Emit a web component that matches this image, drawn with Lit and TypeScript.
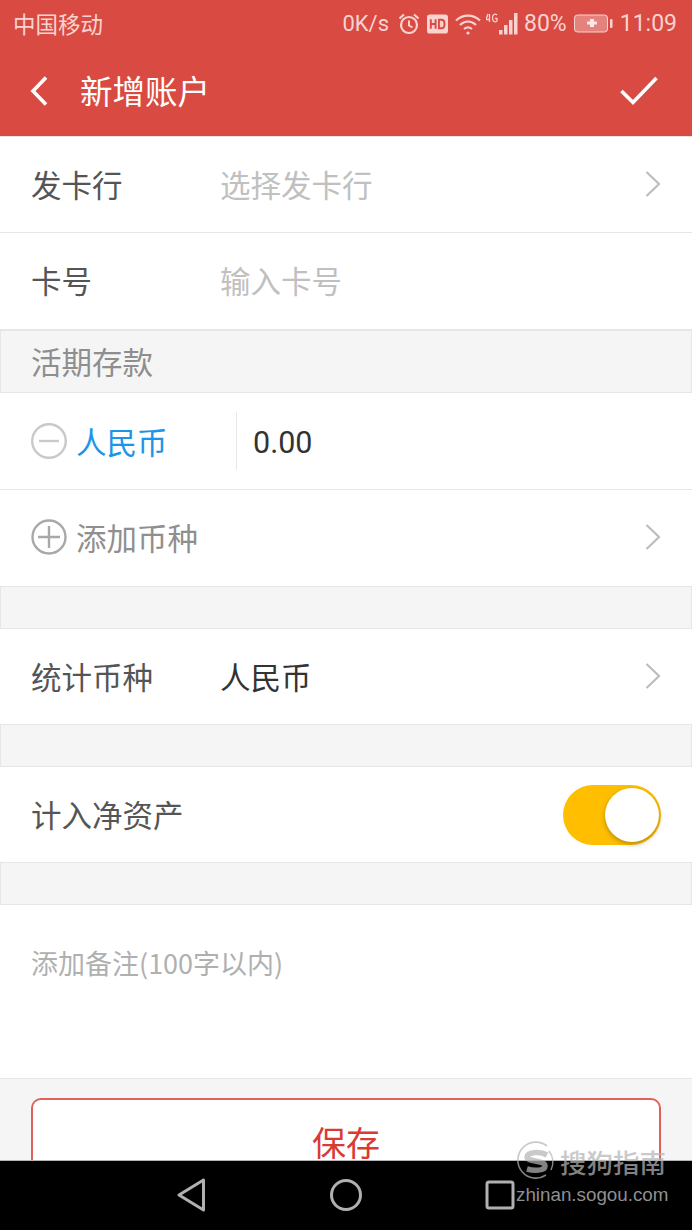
import { LitElement, html, css } from "lit";
import { customElement } from "lit/decorators.js";

const chevron = html`<svg class="chev" width="18" height="28" viewBox="0 0 18 28"><path d="M2.5 2 L15 14 L2.5 26" fill="none" stroke="#bdbdbd" stroke-width="2.2"/></svg>`;

@customElement("app-root")
export class AppRoot extends LitElement {
  static styles = css`
    :host { display: block; width: 692px; height: 1230px; overflow: hidden; position: relative; background: #f5f5f5;
      font-family: "Noto Sans CJK SC", "Roboto", sans-serif; }
    .page { display: flex; flex-direction: column; height: 1230px; }
    .header { background: #d94a42; height: 136px; flex: none; color: #fff; border-bottom: 1px solid #e9e3e2; }
    .status { height: 47px; display: flex; align-items: center; padding: 0 15px 0 13px; color: #f8d3d0; font-size: 22px; font-family: Roboto, "Noto Sans CJK SC", sans-serif; }
    .carrier { font-family: "Noto Sans CJK SC", sans-serif; font-size: 22.5px; flex: 1; line-height: 47px; }
    .status svg { flex: none; display: block; }
    .m9 { margin-left: 9px; }
    .m7 { margin-left: 7px; }
    .m5 { margin-left: 5px; }
    .pct { margin-left: 4px; font-size: 23px; }
    .time { margin-left: 6px; font-size: 23px; }
    .bar { height: 85px; display: flex; align-items: center; padding: 0 34px 0 29px; }
    .bar svg { margin-top: 2px; }
    .title { font-size: 32.5px; margin-left: 31px; flex: 1; color: #fff; line-height: 44px; }
    .content { flex: 1; min-height: 0; overflow: hidden; display: flex; flex-direction: column; }
    .row { height: 97px; box-sizing: border-box; flex: none; background: #fff; border-bottom: 1px solid #e6e6e6; display: flex; align-items: center; padding: 0 30px 2px 31px; font-size: 30.5px; color: #555; line-height: 44px; }
    .short { height: 96px; }
    .row .label { width: 189px; flex: none; }
    .row .value { flex: 1; }
    .ph { color: #c0c0c0; }
    .dark { color: #333; }
    .gap { height: 42px; box-sizing: border-box; flex: none; background: #f5f5f5; border: 1px solid #e6e6e6; border-top: none; }
    .section { height: 63px; flex: none; background: #f5f5f5; border: 1px solid #e6e6e6; box-sizing: border-box; display: flex; align-items: center; padding: 0 0 2px 30px; color: #8e8e8e; font-size: 30.5px; }
    .cur { width: 205px; flex: none; display: flex; align-items: center; height: 58px; border-right: 1px solid #e8e8e8; margin-top: 2px; }
    .cur svg, .add svg { margin-right: 9px; flex: none; }
    .blue { color: #1c95e8; font-size: 30.5px; }
    .amount { font-family: Roboto, sans-serif; font-size: 30.5px; color: #333; margin-left: 16px; padding-top: 6px; }
    .add { flex: 1; display: flex; align-items: center; color: #8f8f8f; font-size: 30.5px; }
    .switch { width: 98px; height: 60px; margin: 2px 1px 0 auto; background: #ffbf00; border-radius: 30px; position: relative; }
    .knob { position: absolute; right: 2px; top: 3px; width: 54px; height: 54px; border-radius: 50%; background: #fff; box-shadow: 0 2px 5px rgba(90,70,0,.45); }
    .notes { height: 174px; flex: none; background: #fff; border-bottom: 1px solid #e6e6e6; padding: 36px 31px 0; box-sizing: border-box; color: #b0b0b0; font-size: 27px; line-height: 44px; }
    .foot { flex: 1; background: #f5f5f5; padding: 19px 31px 0; min-height: 0; overflow: hidden; }
    .btn { height: 62px; background: #fff; border: 2px solid #e0605a; border-bottom: none; border-radius: 10px 10px 0 0; box-sizing: border-box; display: flex; justify-content: center; padding-top: 24px; color: #d93a34; font-size: 34px; line-height: 36px; }
    .nav { height: 70px; flex: none; background: #000; border-top: 1px solid #b5b5b5; box-sizing: border-box; display: flex; align-items: center; padding: 0 0 2px 175px; }
    .nav svg { display: block; flex: none; }
    .nav .home { margin-left: 121px; }
    .nav .recent { margin-left: 121px; }
    .wm { position: absolute; left: 516px; top: 1140px; width: 160px; height: 72px; color: rgba(180,180,180,.72); pointer-events: none; }
    .wm svg { position: absolute; left: 0; top: 0; }
    .wm .cn { position: absolute; left: 44px; top: 4px; font-size: 26.5px; line-height: 36px; white-space: nowrap; font-weight: 500; }
    .wm .en { position: absolute; left: 0; top: 43px; font-family: "Liberation Sans", sans-serif; font-size: 18.8px; line-height: 24px; white-space: nowrap; color: #8f8f8f; }
  `;

  render() {
    return html`
      <div class="page">
        <div class="header">
          <div class="status">
            <span class="carrier">中国移动</span>
            <span>0K/s</span>
            <svg class="m9" width="22" height="22" viewBox="0 0 22 22" fill="none" stroke="#f8d3d0"><circle cx="11" cy="12" r="8" stroke-width="2.2"/><path d="M11 7.5v5l3.5 2" stroke-width="2"/><path d="M1.5 5.5 L6 1.5M20.5 5.5 L16 1.5" stroke-width="2.2"/></svg>
            <svg class="m7" width="21" height="20" viewBox="0 0 22 20"><rect width="22" height="20" rx="3" fill="#f8d3d0"/><path d="M4 5v10M9 5v10M4 10h5" stroke="#d94a42" stroke-width="2" fill="none"/><path d="M12.5 5.5v9h2.5c4.5 0 4.5-9 0-9z" stroke="#d94a42" stroke-width="2" fill="none"/></svg>
            <svg class="m7" width="26" height="22" viewBox="0 0 26 22" fill="none" stroke="#f8d3d0" stroke-width="2.2"><path d="M1 7.5C8 1 18 1 25 7.5"/><path d="M5 12C10 7.5 16 7.5 21 12"/><path d="M9 16C11.500 14 14.500 14 17 16"/><circle cx="13" cy="20" r="1.600" fill="#f8d3d0" stroke="none"/></svg>
            <svg class="m5" width="34" height="22" viewBox="0 0 34 22" fill="#f8d3d0"><path d="M2 1L0 6.500h4M3.500 1v8" stroke="#f8d3d0" stroke-width="1.300" fill="none"/><path d="M11 2C9.500 .5 6.500 1 6.500 5s3.500 4.500 4.500 3V5.500H9" stroke="#f8d3d0" stroke-width="1.300" fill="none"/><rect x="13" y="17" width="3.500" height="4.500"/><rect x="18" y="12" width="3.500" height="9.500"/><rect x="23" y="7" width="3.500" height="14.500"/><rect x="28" y="0" width="3.500" height="21.500"/></svg>
            <span class="pct">80%</span>
            <svg class="m7" width="40" height="20" viewBox="0 0 40 20"><rect x="0.500" y="1" width="33" height="17" rx="3" fill="#e4827d" stroke="#f8d3d0"/><path d="M16 5h4v2.500h3v3h-3v2.500h-4v-2.500h-3v-3h3z" fill="#fbe8e6"/><rect x="36" y="5" width="2.500" height="9" rx="1" fill="#f8d3d0"/></svg>
            <span class="time">11:09</span>
          </div>
          <div class="bar">
            <svg width="20" height="32" viewBox="0 0 20 32"><path d="M17 2.500 L4 16 L17 29.500" fill="none" stroke="#fff" stroke-width="3.600"/></svg>
            <span class="title">新增账户</span>
            <svg width="38" height="30" viewBox="0 0 38 30"><path d="M1.500 15 L13 26.500 L36.500 2" fill="none" stroke="#fff" stroke-width="3.600"/></svg>
          </div>
        </div>
        <div class="content">
          <div class="row short"><span class="label">发卡行</span><span class="value ph">选择发卡行</span>${chevron}</div>
          <div class="row"><span class="label">卡号</span><span class="value ph">输入卡号</span></div>
          <div class="section">活期存款</div>
          <div class="row">
            <div class="cur">
              <svg width="36" height="36" viewBox="0 0 36 36" fill="none" stroke="#c9c9c9" stroke-width="2.400"><circle cx="18" cy="18" r="16.800"/><path d="M8 18h20"/></svg>
              <span class="blue">人民币</span>
            </div>
            <span class="amount">0.00</span>
          </div>
          <div class="row">
            <div class="add">
              <svg width="36" height="36" viewBox="0 0 36 36" fill="none" stroke="#a8a8a8" stroke-width="2.400"><circle cx="18" cy="18" r="16.500"/><path d="M7 18h22M18 7v22"/></svg>
              <span>添加币种</span>
            </div>
            ${chevron}
          </div>
          <div class="gap"></div>
          <div class="row short"><span class="label">统计币种</span><span class="value dark">人民币</span>${chevron}</div>
          <div class="gap"></div>
          <div class="row short"><span>计入净资产</span><div class="switch"><div class="knob"></div></div></div>
          <div class="gap"></div>
          <div class="notes">添加备注(100字以内)</div>
          <div class="foot"><div class="btn">保存</div></div>
        </div>
        <div class="nav">
          <svg width="32" height="36" viewBox="0 0 32 36" fill="none" stroke="#b0b0b0" stroke-width="3" stroke-linejoin="round"><path d="M28.500 3 V33 L4 18 Z"/></svg>
          <svg class="home" width="36" height="36" viewBox="0 0 36 36" fill="none" stroke="#b0b0b0" stroke-width="3"><circle cx="18" cy="18" r="14.500"/></svg>
          <svg class="recent" width="30" height="30" viewBox="0 0 30 30" fill="none" stroke="#b0b0b0" stroke-width="3" stroke-linejoin="round"><rect x="2" y="2" width="26" height="26" rx="2"/></svg>
        </div>
      </div>
      <div class="wm">
        <svg width="40" height="42" viewBox="0 0 40 42" fill="none" stroke="currentColor"><path d="M31 6A18 18 0 1 0 30 35" stroke-width="1.600"/><path d="M33 11A18 18 0 0 1 35 30" stroke-width="1.600"/><path d="M31 15C24 11 11 12 11 17c0 5 18 3 18 9 0 5-11 5-18 3" stroke-width="5.500"/></svg>
        <span class="cn">搜狗指南</span>
        <span class="en">zhinan.sogou.com</span>
      </div>
    `;
  }
}
